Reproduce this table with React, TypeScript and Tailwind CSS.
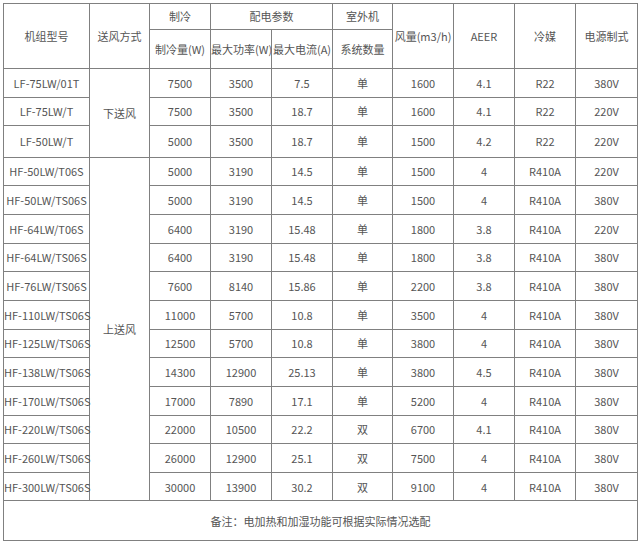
const rows: [string, string, string, string, string, string, string, string, string][] = [
  ['LF-75LW/01T', '7500', '3500', '7.5', '单', '1600', '4.1', 'R22', '380V'],
  ['LF-75LW/T', '7500', '3500', '18.7', '单', '1600', '4.1', 'R22', '220V'],
  ['LF-50LW/T', '5000', '3500', '18.7', '单', '1500', '4.2', 'R22', '220V'],
  ['HF-50LW/T06S', '5000', '3190', '14.5', '单', '1500', '4', 'R410A', '220V'],
  ['HF-50LW/TS06S', '5000', '3190', '14.5', '单', '1500', '4', 'R410A', '380V'],
  ['HF-64LW/T06S', '6400', '3190', '15.48', '单', '1800', '3.8', 'R410A', '220V'],
  ['HF-64LW/TS06S', '6400', '3190', '15.48', '单', '1800', '3.8', 'R410A', '380V'],
  ['HF-76LW/TS06S', '7600', '8140', '15.86', '单', '2200', '3.8', 'R410A', '380V'],
  ['HF-110LW/TS06S', '11000', '5700', '10.8', '单', '3500', '4', 'R410A', '380V'],
  ['HF-125LW/TS06S', '12500', '5700', '10.8', '单', '3800', '4', 'R410A', '380V'],
  ['HF-138LW/TS06S', '14300', '12900', '25.13', '单', '3800', '4.5', 'R410A', '380V'],
  ['HF-170LW/TS06S', '17000', '7890', '17.1', '单', '5200', '4', 'R410A', '380V'],
  ['HF-220LW/TS06S', '22000', '10500', '22.2', '双', '6700', '4.1', 'R410A', '380V'],
  ['HF-260LW/TS06S', '26000', '12900', '25.1', '双', '7500', '4', 'R410A', '380V'],
  ['HF-300LW/TS06S', '30000', '13900', '30.2', '双', '9100', '4', 'R410A', '380V'],
]

const cell = 'border border-[#808080] p-0 text-center align-middle whitespace-nowrap leading-[14px]'

export default function App() {
  return (
    <div
      className="w-[640px] h-[545px] bg-white pl-[3px] pt-[3px] text-[11px] text-[#555]"
      style={{ fontFamily: '"Noto Sans CJK SC", "Noto Sans", sans-serif' }}
    >
      <table className="table-fixed border-collapse w-[634px]">
        <colgroup>
          <col className="w-[86px]" />
          <col className="w-[60px]" />
          <col className="w-[61px]" />
          <col className="w-[61px]" />
          <col className="w-[61px]" />
          <col className="w-[60px]" />
          <col className="w-[61px]" />
          <col className="w-[61px]" />
          <col className="w-[61px]" />
          <col className="w-[62px]" />
        </colgroup>
        <thead>
          <tr className="h-[25.5px]">
            <td rowSpan={2} className={cell}>机组型号</td>
            <td rowSpan={2} className={cell}>送风方式</td>
            <td className={cell}>制冷</td>
            <td colSpan={2} className={cell}>配电参数</td>
            <td className={cell}>室外机</td>
            <td rowSpan={2} className={cell}>风量(m3/h)</td>
            <td rowSpan={2} className={cell}>AEER</td>
            <td rowSpan={2} className={cell}>冷媒</td>
            <td rowSpan={2} className={cell}>电源制式</td>
          </tr>
          <tr className="h-[39.5px]">
            <td className={cell}>制冷量(W)</td>
            <td className={cell}>最大功率(W)</td>
            <td className={cell}>最大电流(A)</td>
            <td className={cell}>系统数量</td>
          </tr>
        </thead>
        <tbody>
          {rows.map((r, i) => (
            <tr key={r[0]} className={i === 2 ? 'h-[31.3px]' : 'h-[28.67px]'}>
              <td className={cell}>{r[0]}</td>
              {i === 0 && (
                <td rowSpan={3} className={cell}>下送风</td>
              )}
              {i === 3 && (
                <td rowSpan={12} className={cell}>上送风</td>
              )}
              {r.slice(1).map((v, j) => (
                <td key={j} className={cell}>{v}</td>
              ))}
            </tr>
          ))}
          <tr className="h-[39.4px]">
            <td colSpan={10} className={cell}>备注：电加热和加湿功能可根据实际情况选配</td>
          </tr>
        </tbody>
      </table>
    </div>
  )
}
